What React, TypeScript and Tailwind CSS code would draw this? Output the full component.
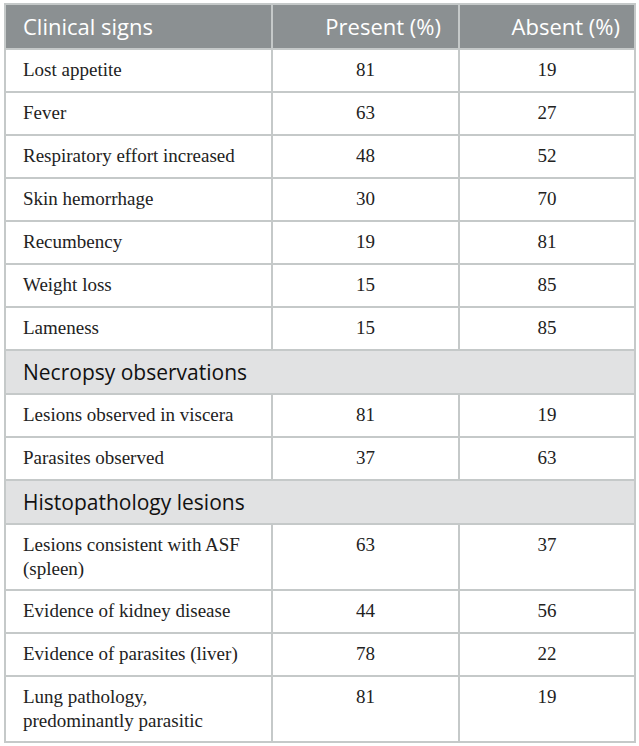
const rows: Array<{ label: string; present?: string; absent?: string; section?: boolean }> = [
  { label: 'Lost appetite', present: '81', absent: '19' },
  { label: 'Fever', present: '63', absent: '27' },
  { label: 'Respiratory effort increased', present: '48', absent: '52' },
  { label: 'Skin hemorrhage', present: '30', absent: '70' },
  { label: 'Recumbency', present: '19', absent: '81' },
  { label: 'Weight loss', present: '15', absent: '85' },
  { label: 'Lameness', present: '15', absent: '85' },
  { label: 'Necropsy observations', section: true },
  { label: 'Lesions observed in viscera', present: '81', absent: '19' },
  { label: 'Parasites observed', present: '37', absent: '63' },
  { label: 'Histopathology lesions', section: true },
  { label: 'Lesions consistent with ASF (spleen)', present: '63', absent: '37' },
  { label: 'Evidence of kidney disease', present: '44', absent: '56' },
  { label: 'Evidence of parasites (liver)', present: '78', absent: '22' },
  { label: 'Lung pathology, predominantly parasitic', present: '81', absent: '19' },
];

const serif = "font-['Liberation_Serif',serif]";
const sans = "font-['Open_Sans',sans-serif]";

export default function App() {
  return (
    <div className="w-[639px] h-[746px] bg-white pt-[3px] pl-[4px]">
      <table className="w-[630px] border-collapse border-2 border-[#c5c9c9] table-fixed">
        <colgroup>
          <col className="w-[267px]" />
          <col className="w-[187px]" />
          <col className="w-[176px]" />
        </colgroup>
        <thead>
          <tr className={`bg-[#8b9092] text-white text-[22px] h-[45px] ${sans}`}>
            <th className="text-left font-normal pl-[17px] border-2 border-[#c5c9c9] border-t-0">Clinical signs</th>
            <th className="text-right font-normal pr-[17px] border-2 border-[#c5c9c9] border-t-0">Present (%)</th>
            <th className="text-right font-normal pr-[14px] border-2 border-[#c5c9c9] border-t-0">Absent (%)</th>
          </tr>
        </thead>
        <tbody>
          {rows.map((r) =>
            r.section ? (
              <tr key={r.label} className="bg-[#e1e2e3] h-[44px]">
                <td colSpan={3} className={`pl-[17px] py-0 leading-[40px] text-[21px] text-[#111] border-2 border-[#c5c9c9] ${sans}`}>
                  {r.label}
                </td>
              </tr>
            ) : (
              <tr key={r.label} className={`text-[19px] text-[#222] ${serif} ${r.label.length > 30 ? 'h-[66px]' : 'h-[43px]'}`}>
                <td className="pl-[17px] pr-[16px] py-[8px] leading-[24px] align-top border-2 border-[#c5c9c9]">
                  {r.label}
                </td>
                <td className="text-center py-[8px] leading-[24px] align-top border-2 border-[#c5c9c9]">{r.present}</td>
                <td className="text-center py-[8px] leading-[24px] align-top border-2 border-[#c5c9c9]">{r.absent}</td>
              </tr>
            )
          )}
        </tbody>
      </table>
    </div>
  );
}
